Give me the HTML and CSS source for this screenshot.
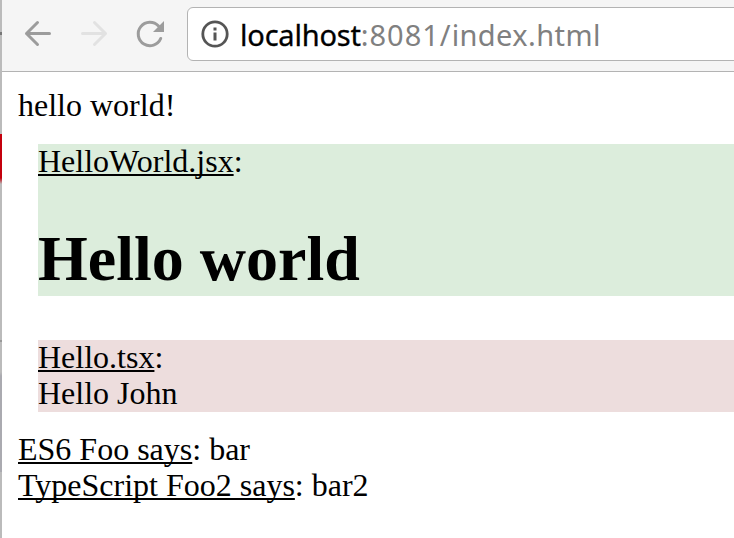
FILE: index.html
```
<!DOCTYPE html>
<html lang="en">
<head>
<meta charset="utf-8">
<title>localhost:8081/index.html</title>
<link rel="stylesheet" href="styles.css">
</head>
<body>
<div class="edge"></div>
<div class="window">
  <header class="toolbar">
    <svg class="nav" viewBox="2 0 160 71" aria-hidden="true">
      <g fill="none" stroke="#9c9c9c" stroke-width="3" stroke-linecap="round" stroke-linejoin="round">
        <path d="M49.500 33.500H26.500M37.500 22.500L26.500 33.500L37.500 44.500"/>
        <path stroke="#e2e2e2" d="M82.500 33.500H105.500M94.500 22.500L105.500 33.500L94.500 44.500"/>
        <path d="M158.500 26A11.700 11.700 0 1 0 160.700 38.500"/>
      </g>
      <path fill="#9c9c9c" d="M164 21V32H153Z"/>
    </svg>
    <div class="address">
      <svg class="info" viewBox="0 0 28 28" aria-hidden="true">
        <circle cx="14" cy="14" r="12.200" fill="none" stroke="#555" stroke-width="2.800"/>
        <path fill="#555" d="M12.500 7.500h3v3h-3zM12.500 12.500h3v8h-3z"/>
      </svg>
      <span class="host">localhost</span><span class="port">:8081/</span><span class="path">index.html</span>
    </div>
  </header>
  <main class="page">
    <div class="line">hello world!</div>
    <section class="box green">
      <div class="line"><u>HelloWorld.jsx</u>:</div>
      <h1>Hello world</h1>
    </section>
    <section class="box pink">
      <div class="line"><u>Hello.tsx</u>:</div>
      <div class="line">Hello John</div>
    </section>
    <div class="line"><u>ES6 Foo says</u>: bar</div>
    <div class="line"><u>TypeScript Foo2 says</u>: bar2</div>
  </main>
</div>
</body>
</html>
```
FILE: styles.css
```
* { box-sizing: border-box; }
body {
  margin: 0;
  display: flex;
  height: 538px;
  overflow: hidden;
  background: #fff;
}
.edge {
  flex: none;
  width: 2px;
  background: linear-gradient(#bbb 0 32px, #777 32px 35px, #bbb 35px 134px, #c4000d 134px 178px, #bbb 184px 340px, #999 340px 342px, #bbb 342px 372px, #aaaab0 376px 472px, #bbb 472px);
}
.window { flex: 1; min-width: 0; }
.toolbar {
  display: flex;
  height: 72px;
  overflow: hidden;
  background: #f5f5f5;
  border-bottom: 1px solid #b3b3b3;
}
.nav { flex: none; width: 160px; height: 71px; margin-right: 25px; overflow: visible; }
.address {
  flex: none;
  display: flex;
  align-items: center;
  width: 560px;
  height: 54px;
  margin-top: 7px;
  padding: 0 0 0 13px;
  border: 1px solid #b3b3b3;
  border-radius: 6px;
  background: #fff;
  font: 29px/51px "Noto Sans", sans-serif;
  white-space: nowrap;
}
.info { flex: none; width: 28px; height: 28px; margin-right: 11px; }
.host { color: #000; letter-spacing: -0.2px; -webkit-text-stroke: 0.3px #000; }
.port, .path { color: #808080; }
.port { letter-spacing: 1px; }
.path { letter-spacing: 0.4px; }
.page {
  padding: 16px 0 0 16px;
  font: 32px/34px "Liberation Serif", serif;
  color: #000;
}
.line { height: 36px; }
.page u {
  text-decoration-thickness: 2px;
  text-underline-offset: 2px;
  text-decoration-skip-ink: none;
}
.box { margin: 20px 0 20px 20px; }
.green { height: 152px; margin-bottom: 44px; background: #dceddc; }
.pink { background: #eddddd; }
h1 { margin: 43px 0 0; font-size: 64px; line-height: 71px; }
```
